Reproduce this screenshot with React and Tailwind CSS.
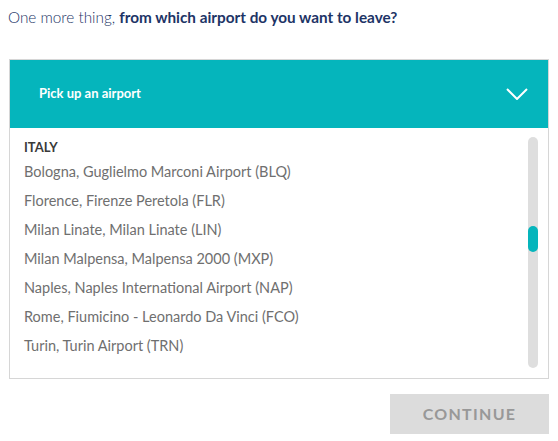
const airports = [
  "Bologna, Guglielmo Marconi Airport (BLQ)",
  "Florence, Firenze Peretola (FLR)",
  "Milan Linate, Milan Linate (LIN)",
  "Milan Malpensa, Malpensa 2000 (MXP)",
  "Naples, Naples International Airport (NAP)",
  "Rome, Fiumicino - Leonardo Da Vinci (FCO)",
  "Turin, Turin Airport (TRN)",
];

export default function App() {
  return (
    <div className="w-[558px] h-[441px] bg-white font-['Lato',sans-serif]">
      {/* Question */}
      <h1 className="pl-2 pt-[6px] text-[15.3px] leading-[22px] text-[#1d3466]">
        <span className="font-light">One more thing, </span>
        <span className="font-bold">from which airport do you want to leave?</span>
      </h1>

      {/* Dropdown */}
      <div className="ml-[9px] mt-[31px] w-[540px] h-[320px] border border-[#d6d6d6] flex flex-col">
        <div className="h-[68px] bg-[#05b5bc] flex items-center justify-between pl-[29px] pr-[20px]">
          <span className="text-white text-[13px] font-bold">Pick up an airport</span>
          <svg width="22" height="12" viewBox="0 0 22 12" fill="none">
            <path d="M1 1l10 10L21 1" stroke="white" strokeWidth="2" />
          </svg>
        </div>
        <div className="flex-1 flex pl-[14px] pr-[10px] pt-[9px] pb-[10px]">
          <div className="flex-1 pt-[1px]">
            <div className="text-[13px] font-bold text-[#3a3a3a] leading-[18px]">ITALY</div>
            <ul className="mt-[1px]">
              {airports.map((a) => (
                <li key={a} className="h-[29px] flex items-center text-[14.5px] text-[#6f6f6f]">
                  {a}
                </li>
              ))}
            </ul>
          </div>
          <div className="w-[10px] rounded-full bg-[#dedede] relative">
            <div className="absolute left-0 top-[89px] w-[10px] h-[26px] rounded-full bg-[#05b5bc]" />
          </div>
        </div>
      </div>

      {/* Continue */}
      <div className="flex justify-end pr-[9px] mt-[15px]">
        <button className="w-[159px] h-[40px] bg-[#dcdcdc] text-[#989898] text-[16px] font-bold tracking-[1.3px]">
          CONTINUE
        </button>
      </div>
    </div>
  );
}
